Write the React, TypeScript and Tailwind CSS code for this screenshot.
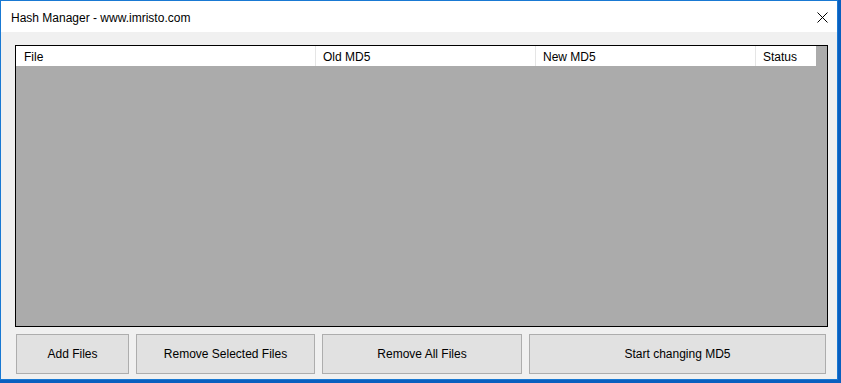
import React from "react";

const font = { fontFamily: '"Liberation Sans", Arial, sans-serif' };

export default function App() {
  return (
    <div className="w-[841px] h-[383px] bg-[#0a5fbf] overflow-hidden" style={font}>
      <div className="w-[838px] h-[380px] border border-[#1979d3] flex flex-col">
        <div className="h-[31px] bg-white flex items-center justify-between">
          <span className="pl-[10px] pt-[2px] text-[12px] text-black leading-none">Hash Manager - www.imristo.com</span>
          <div className="pr-[9px] pt-[1px] flex items-center justify-center">
            <svg width="11" height="11" viewBox="0 0 11 11">
              <path d="M0.5 0.5 L10.5 10.5 M10.5 0.5 L0.5 10.5" stroke="#000" strokeWidth="1" />
            </svg>
          </div>
        </div>
        <div className="flex-1 bg-[#f0f0f0] flex flex-col pl-[14px] pt-[13px]">
          <div className="w-[813px] h-[282px] border border-black bg-[#ababab]">
            <div className="flex h-[20px] text-[12px] text-black">
              <div className="w-[300px] bg-white border-r border-[#e5e5e5] pl-[8px] pt-[2px] flex items-center">File</div>
              <div className="w-[220px] bg-white border-r border-[#e5e5e5] pl-[7px] pt-[2px] flex items-center">Old MD5</div>
              <div className="w-[220px] bg-white border-r border-[#e5e5e5] pl-[7px] pt-[2px] flex items-center">New MD5</div>
              <div className="w-[60px] bg-white pl-[7px] pt-[2px] flex items-center">Status</div>
            </div>
          </div>
          <div className="flex gap-[7px] mt-[7px] pl-[1px] text-[12px] text-black">
            <div className="w-[113px] h-[40px] bg-[#e1e1e1] border border-[#adadad] flex items-center justify-center">Add Files</div>
            <div className="w-[179px] h-[40px] bg-[#e1e1e1] border border-[#adadad] flex items-center justify-center">Remove Selected Files</div>
            <div className="w-[200px] h-[40px] bg-[#e1e1e1] border border-[#adadad] flex items-center justify-center">Remove All Files</div>
            <div className="w-[297px] h-[40px] bg-[#e1e1e1] border border-[#adadad] flex items-center justify-center">Start changing MD5</div>
          </div>
        </div>
      </div>
    </div>
  );
}
